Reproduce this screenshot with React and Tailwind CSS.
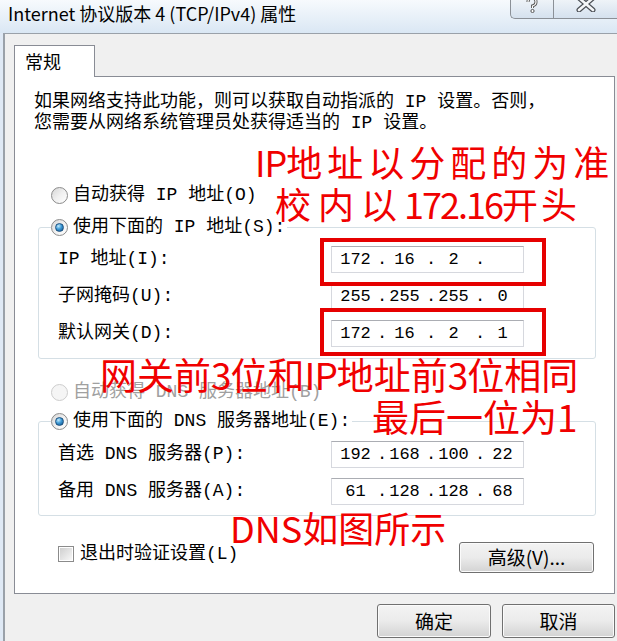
import React from "react";

const ui = "font-['Liberation_Mono','Noto_Sans_CJK_SC',monospace]";
const cjk = "font-['Noto_Sans_CJK_SC','Noto_Sans',sans-serif]";

function Radio({ checked, disabled }) {
  return (
    <span
      className={`inline-flex h-[17px] w-[17px] shrink-0 items-center justify-center rounded-full border ${
        disabled
          ? "border-[#cdcdcd] bg-[#f5f5f5]"
          : "border-[#8b8b8b] bg-gradient-to-br from-[#d6d6d6] via-[#f0f0f0] to-[#ffffff]"
      }`}
    >
      {checked && (
        <span className="h-[9px] w-[9px] rounded-full border border-[#1c5180] bg-[radial-gradient(circle_at_35%_30%,#c4ecff,#3d9ad6_45%,#0e4b82)]" />
      )}
    </span>
  );
}

function IpBox({ parts }) {
  return (
    <div className="h-[27px] w-[193px] border border-[#d6d8de] border-t-[#abadb3] bg-white pl-[2px]">
      <div className="grid h-full grid-cols-[43px_6px_43px_6px_43px_6px_43px] items-center text-[17px] leading-none text-black">
        {parts.map((p, i) => (
          <React.Fragment key={i}>
            <span className="text-center">{p}</span>
            {i < 3 && <span className="text-center">.</span>}
          </React.Fragment>
        ))}
      </div>
    </div>
  );
}

function Row({ label, parts }) {
  return (
    <div className="flex h-[37px] items-center pl-[19px]">
      <span className="w-[273px] text-[18px]">{label}</span>
      <IpBox parts={parts} />
    </div>
  );
}

function WinButton({ children, className }) {
  return (
    <button
      className={`flex items-center justify-center rounded-[3px] border border-[#707070] bg-gradient-to-b from-[#f3f3f3] via-[#ebebeb] to-[#d3d3d3] shadow-[inset_0_0_0_1px_#fbfbfb] text-[19px] text-black ${cjk} ${className}`}
    >
      {children}
    </button>
  );
}

export default function App() {
  return (
    <div className={`relative h-[641px] w-[617px] overflow-hidden bg-[#dfe9f5] text-black ${ui}`}>
      {/* title bar */}
      <div className="relative flex h-[33px] items-start bg-gradient-to-b from-[#f7fafd] to-[#dae7f4]">
        <span className={`ml-[8px] mt-[2px] text-[18px] leading-[22px] text-black ${cjk}`}>
          Internet 协议版本 4 (TCP/IPv4) 属性
        </span>
        <div className="ml-auto flex h-[19px]">
          <div className="flex w-[43px] items-start justify-center rounded-bl-[5px] border border-t-0 border-r-0 border-[#8b9097] bg-gradient-to-b from-[#eef3f8] to-[#d5e1ee]">
            <svg width="14" height="16" viewBox="0 0 14 16" className="-mt-[3px]">
              <path d="M3 5 Q3 1 7 1 Q11 1 11 5 Q11 8 7.5 9 L7.5 11" fill="none" stroke="#555" strokeWidth="3" />
              <path d="M3 5 Q3 1 7 1 Q11 1 11 5 Q11 8 7.5 9 L7.5 11" fill="none" stroke="#fff" strokeWidth="1.2" />
              <circle cx="7.5" cy="14" r="1.6" fill="#fff" stroke="#555" />
            </svg>
          </div>
          <div className="flex w-[64px] items-start justify-center border-l border-b border-[#8b9097] bg-gradient-to-b from-[#eef3f8] to-[#d5e1ee]">
            <svg width="22" height="16" viewBox="0 0 22 16" className="-mt-[4px]">
              <path d="M4 2 L18 14 M18 2 L4 14" stroke="#4b4f55" strokeWidth="5" strokeLinecap="round" />
              <path d="M4 2 L18 14 M18 2 L4 14" stroke="#f4f6f8" strokeWidth="2.6" strokeLinecap="round" />
            </svg>
          </div>
        </div>
      </div>

      {/* dialog body */}
      <div className="ml-[3px] h-[608px] border-l-2 border-t border-[#9aa1a9] bg-[#f0f0f0] pl-[9px] pr-[2px]">
        <div className="mt-[11px] flex">
          <div className={`relative z-10 -mb-px flex h-[32px] w-[81px] items-center border border-b-0 border-[#898c95] bg-white pl-[10px] text-[18px] ${cjk}`}>
            常规
          </div>
        </div>
        <div className="h-[518px] border border-[#898c95] bg-white">
          <p className="ml-[19px] mt-[15px] text-[18px] leading-[21px]">
            如果网络支持此功能，则可以获取自动指派的 IP 设置。否则，
            <br />
            您需要从网络系统管理员处获得适当的 IP 设置。
          </p>

          <label className="ml-[36px] mt-[49px] flex h-[24px] items-center gap-[5px] text-[18px]">
            <Radio />
            <span>自动获得 IP 地址(O)</span>
          </label>

          <fieldset className="ml-[23px] mt-[8px] w-[558px] rounded-[3px] border border-[#d5dfe5] pb-[6px] pt-[2px]">
            <legend className="ml-[12px] flex h-[24px] items-center gap-[5px] bg-white pr-[2px] text-[18px]">
              <Radio checked />
              <span>使用下面的 IP 地址(S):</span>
            </legend>
            <Row label="IP 地址(I):" parts={["172", "16", "2", ""]} />
            <Row label="子网掩码(U):" parts={["255", "255", "255", "0"]} />
            <Row label="默认网关(D):" parts={["172", "16", "2", "1"]} />
          </fieldset>

          <label className="ml-[36px] mt-[21px] flex h-[24px] items-center gap-[5px] text-[18px] text-[#a0a0a0]">
            <Radio disabled />
            <span>自动获得 DNS 服务器地址(B)</span>
          </label>

          <fieldset className="ml-[23px] mt-[5px] w-[558px] rounded-[3px] border border-[#d5dfe5] pb-[5px] pt-[3px]">
            <legend className="ml-[12px] flex h-[24px] items-center gap-[5px] bg-white pr-[2px] text-[18px]">
              <Radio checked />
              <span>使用下面的 DNS 服务器地址(E):</span>
            </legend>
            <Row label="首选 DNS 服务器(P):" parts={["192", "168", "100", "22"]} />
            <Row label="备用 DNS 服务器(A):" parts={["61", "128", "128", "68"]} />
          </fieldset>

          <div className="ml-[43px] mr-[20px] mt-[25px] flex h-[32px] items-center justify-between">
            <label className="-mt-[6px] flex items-center gap-[6px] text-[18px]">
              <span className="flex h-[16px] w-[16px] items-center justify-center border border-[#8b8b8b] bg-white">
                <span className="h-[12px] w-[12px] bg-gradient-to-br from-[#cfcfcf] to-[#f7f7f7]" />
              </span>
              <span>退出时验证设置(L)</span>
            </label>
            <WinButton className="h-[31px] w-[135px]">
              <span>高级(V)...</span>
            </WinButton>
          </div>
        </div>

        <div className="mt-[10px] flex justify-end gap-[11px]">
          <WinButton className="h-[34px] w-[114px]">确定</WinButton>
          <WinButton className="h-[34px] w-[113px]">取消</WinButton>
        </div>
      </div>

      {/* red annotation boxes */}
      <div className="absolute left-[320px] top-[238px] h-[48px] w-[226px] border-4 border-[#e60000]" />
      <div className="absolute left-[320px] top-[308px] h-[48px] w-[226px] border-4 border-[#e60000]" />

      {/* red annotation text */}
      <div className={`absolute left-[255px] top-[143px] whitespace-nowrap text-[36px] leading-none text-[#f00000] ${cjk}`}>
        <span className="tracking-[-1px]">IP</span>
        <span className="tracking-[5px]">地址以分配的为准</span>
      </div>
      <div className={`absolute left-[275px] top-[185px] whitespace-nowrap text-[36px] leading-none text-[#f00000] ${cjk}`}>
        <span className="tracking-[7px]">校内以</span>
        <span className="tracking-[-2px]">172.16</span>
        <span className="tracking-[3px]">开头</span>
      </div>
      <div className={`absolute left-[100px] top-[356px] whitespace-nowrap text-[37px] leading-none text-[#f00000] ${cjk}`}>
        网关前<span className="tracking-[-1px]">3</span>位和<span className="tracking-[-1px]">IP</span>地址前<span className="tracking-[-1px]">3</span>位相同
      </div>
      <div className={`absolute left-[372px] top-[398px] whitespace-nowrap text-[37px] leading-none text-[#f00000] ${cjk}`}>
        最后一位为1
      </div>
      <div className={`absolute left-[230px] top-[509px] whitespace-nowrap text-[36px] leading-none text-[#f00000] ${cjk}`}>
        DNS如图所示
      </div>
    </div>
  );
}
